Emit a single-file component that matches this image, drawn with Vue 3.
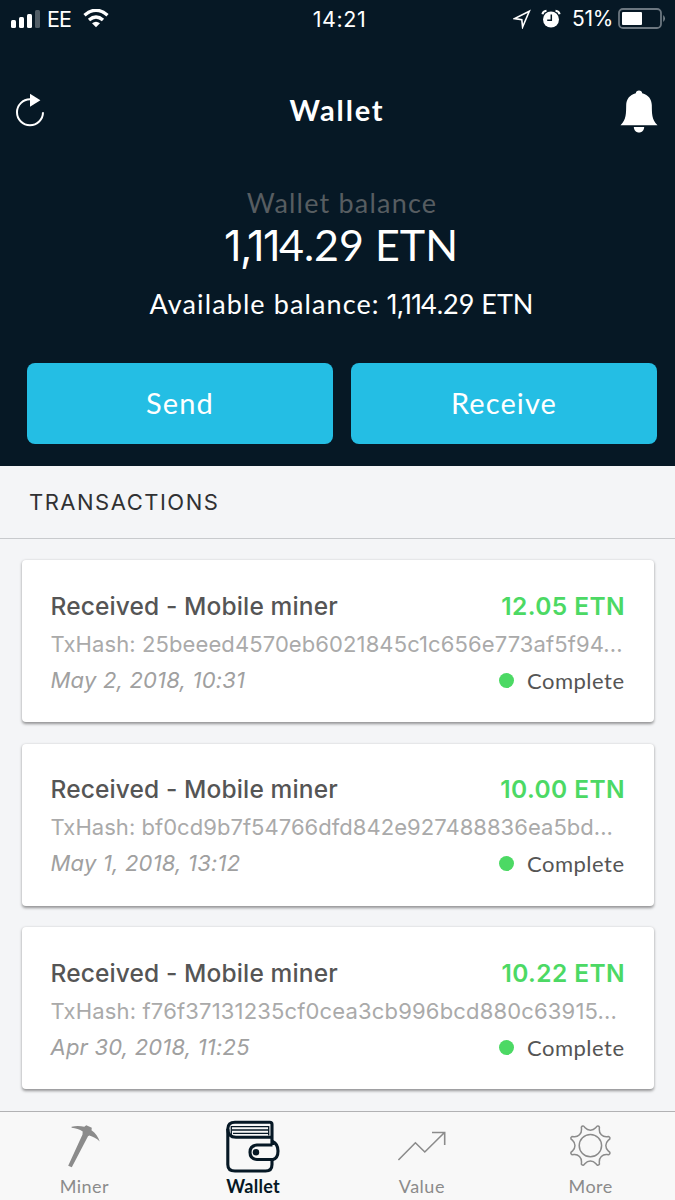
<template>
  <div class="screen">
    <header class="top">
      <div class="status-bar">
        <div class="status-left">
          <svg class="signal" width="31" height="20" viewBox="0 0 31 20">
            <rect x="0" y="10" width="5" height="8" rx="1.5" />
            <rect x="8" y="7" width="5" height="11" rx="1.5" />
            <rect x="16" y="4" width="5" height="14" rx="1.5" />
            <rect x="24" y="0" width="5" height="18" rx="1.5" opacity=".3" />
          </svg>
          <span class="carrier">EE</span>
          <svg class="wifi" width="26" height="20" viewBox="0 0 26 20">
            <path d="M1.5 6.2Q13 -3.6 24.5 6.2M6 11Q13 5 20 11" fill="none" stroke="#fff" stroke-width="3.4" />
            <path d="M9 14.2Q13 11.2 17 14.2L13 18.2Z" />
          </svg>
        </div>
        <span class="time">14:21</span>
        <div class="status-right">
          <svg width="18" height="20" viewBox="0 0 18 20">
            <path d="M16.3 2.2L1.6 9.6L8.8 10.8L9.6 18Z" fill="none" stroke="#fff" stroke-width="1.6" />
          </svg>
          <svg class="alarm" width="20" height="20" viewBox="0 0 20 20">
            <circle cx="10" cy="10.5" r="8" />
            <path d="M1.4 5.2Q2 2 5.5 1.7M14.5 1.7Q18 2 18.6 5.2" fill="none" stroke="#fff" stroke-width="2" />
            <path d="M10.3 5.5V11.2H6.2" fill="none" stroke="#061825" stroke-width="1.5" />
          </svg>
          <span class="percent">51%</span>
          <svg class="battery" width="49" height="22" viewBox="0 0 49 22">
            <rect x="1" y="1" width="42" height="19" rx="4" fill="none" stroke="#6c7780" stroke-width="1.8" />
            <rect x="4" y="4" width="20" height="13" rx="1" />
            <path d="M45.3 7Q48.5 10.5 45.3 14Z" fill="#8b949b" />
          </svg>
        </div>
      </div>

      <div class="nav">
        <svg class="refresh" width="30" height="36" viewBox="0 0 30 36">
          <path d="M28 19.3A13 13 0 1 1 15 6.3" fill="none" stroke="#fff" stroke-width="2" />
          <path d="M15 .8L25.4 7.3L15 13.8Z" />
        </svg>
        <h1>Wallet</h1>
        <svg class="bell" width="38" height="44" viewBox="0 0 38 44">
          <path d="M19 .5C20.8 .5 22 1.6 22.2 3.2C28.5 4.6 31.6 9.5 31.8 15C32 23 31.5 29.5 37.5 35.2H.5C6.5 29.5 6 23 6.2 15C6.4 9.5 9.5 4.6 15.8 3.2C16 1.6 17.2 .5 19 .5Z" />
          <path d="M13.8 37H24.2C24 40.3 22 42.5 19 42.5S14 40.3 13.8 37Z" />
        </svg>
      </div>

      <p class="balance-label">Wallet balance</p>
      <p class="balance"><span class="ones">1,11</span>4.29 ETN</p>
      <p class="available"><span class="available-label">Available balance:</span> <span class="ones">1,11</span>4.29 ETN</p>

      <div class="actions">
        <button>Send</button>
        <button>Receive</button>
      </div>
    </header>

    <h2>TRANSACTIONS</h2>

    <main>
      <div v-for="tx in transactions" :key="tx.hash" class="card">
        <div class="row">
          <span class="title">Received - Mobile miner</span>
          <span class="amount">{{ tx.amount }} ETN</span>
        </div>
        <p class="hash" :style="{ letterSpacing: tx.tracking + 'px' }">TxHash: {{ tx.hash }}...</p>
        <div class="row">
          <span class="date">{{ tx.date }}</span>
          <span class="state"><i class="dot"></i>Complete</span>
        </div>
      </div>
    </main>

    <nav class="tabs">
      <a class="tab">
        <svg width="56" height="56" viewBox="0 0 56 56">
          <path fill="#8b8b8b" d="M15.6 9.7C20 8.6 24.5 8.8 28.3 9.8L30.3 8.3L35.8 10.7L35.5 13.3C39.5 16 42.3 20 43.7 24.5C40.5 21.4 37 19.6 33.3 18.6L32 19.3L15.8 50.3L12.2 48.7L26.5 17.5L26.7 14.5C23.5 12.2 20 11 15.6 10.7Z" />
        </svg>
        <span>Miner</span>
      </a>
      <a class="tab active">
        <svg width="56" height="56" viewBox="0 0 56 56" fill="none" stroke="#061825" stroke-width="3.1">
          <path d="M47 27V7.5Q47 5.3 44.8 5.3H10Q2.8 5.3 2.8 12V47.5Q2.8 54 10 54H40.5Q47 54 47 47.5V43" />
          <path d="M2.8 12Q2.8 20.3 11 20.3H47" />
          <path d="M47.5 28H32Q25 28.5 25 35.3T32 42.5H48Q53 41 53 34T47.5 24.5V28" />
          <circle cx="31" cy="35.3" r="3.2" fill="#061825" stroke="none" />
          <path d="M6.3 18V9.6H43.7V18.5M7 13H43.5M8 16.3H43.5" stroke-width="1.3" />
        </svg>
        <span>Wallet</span>
      </a>
      <a class="tab">
        <svg width="56" height="56" viewBox="0 0 56 56" fill="none" stroke="#8b8b8b" stroke-width="1.6">
          <path d="M4.4 43L21.4 25.8L30.8 35L50.5 15.5M38 15.5H50.7V28" />
        </svg>
        <span>Value</span>
      </a>
      <a class="tab">
        <svg width="56" height="56" viewBox="0 0 56 56" fill="none" stroke="#8b8b8b" stroke-width="1.5">
          <path :d="gear" stroke-linejoin="round" />
          <circle cx="27.4" cy="28.6" r="11.2" />
        </svg>
        <span>More</span>
      </a>
    </nav>
  </div>
</template>

<script setup>
const transactions = [
  { amount: '12.05', hash: '25beeed4570eb6021845c1c656e773af5f94', date: 'May 2, 2018, 10:31', tracking: 0.1 },
  { amount: '10.00', hash: 'bf0cd9b7f54766dfd842e927488836ea5bd', date: 'May 1, 2018, 13:12', tracking: 0.04 },
  { amount: '10.22', hash: 'f76f37131235cf0cea3cb996bcd880c63915', date: 'Apr 30, 2018, 11:25', tracking: 0.17 },
];

const polar = (radius, degrees) => {
  const angle = (degrees * Math.PI) / 180;
  return `${(27.4 + radius * Math.cos(angle)).toFixed(2)} ${(28.6 + radius * Math.sin(angle)).toFixed(2)}`;
};

// eight teeth with a round hollow between each pair
const gear =
  [...Array(8).keys()]
    .map((i) => {
      const a = i * 45 + 22.5;
      return `${i ? 'L' : 'M'}${polar(20.6, a - 3.5)}Q${polar(21.6, a)} ${polar(20.6, a + 3.5)}L${polar(18.6, a + 6)}A7 7 0 0 0 ${polar(18.6, a + 39)}`;
    })
    .join('') + 'Z';
</script>

<style>
body {
  margin: 0;
}
</style>

<style scoped>
.screen {
  width: 675px;
  height: 1200px;
  overflow: hidden;
  display: flex;
  flex-direction: column;
  background: #f4f5f7;
  font-family: Inter, "Liberation Sans", sans-serif;
}

h1, h2, p {
  margin: 0;
  font-weight: 400;
}

svg {
  display: block;
  flex-shrink: 0;
}

.top {
  height: 466px;
  box-sizing: border-box;
  background: #061825;
  color: #fff;
  fill: #fff;
  font-family: Lato, sans-serif;
  text-align: center;
}

.status-bar {
  height: 37px;
  padding: 0 10px 0 11px;
  display: grid;
  grid-template-columns: 1fr auto 1fr;
  align-items: center;
  font-family: Inter, sans-serif;
  font-size: 21.5px;
}

.status-left,
.status-right {
  display: flex;
  align-items: center;
}

.status-right {
  justify-content: flex-end;
}

.signal {
  margin-right: 5px;
  margin-top: 2px;
}

.carrier {
  letter-spacing: -1px;
}

.wifi {
  margin-left: 12px;
}

.time {
  padding-left: 3px;
  letter-spacing: 0.6px;
}

.alarm {
  margin-left: 10px;
}

.percent {
  margin: 0 5px 0 11px;
  font-size: 21px;
  letter-spacing: -0.3px;
}

.battery {
  margin-top: 1px;
  margin-right: -2px;
}

.nav {
  height: 44px;
  padding: 0 17px 0 15px;
  margin-top: 53px;
  display: flex;
  align-items: center;
  justify-content: space-between;
}

.refresh {
  margin-top: -2px;
}

h1 {
  margin-top: -5px;
  padding-left: 9px;
  font-size: 29px;
  font-weight: 700;
  letter-spacing: 1.8px;
}

.balance-label {
  margin-top: 53px;
  padding-left: 9px;
  font-size: 27px;
  line-height: 32px;
  letter-spacing: 1.2px;
  color: #575d61;
}

/* narrow figure ones without a foot */
.ones {
  font-family: Inter, sans-serif;
  letter-spacing: -0.036em;
}

.balance {
  height: 52px;
  padding-left: 7px;
  font-size: 43px;
  line-height: 52px;
}

.available {
  height: 32px;
  margin-top: 17px;
  padding-left: 8px;
  font-size: 27px;
  line-height: 32px;
}

.available-label {
  letter-spacing: 1.1px;
}

.actions {
  margin-top: 43px;
  padding: 0 18px 0 27px;
  display: flex;
  gap: 18px;
}

button {
  flex: 1;
  height: 81px;
  padding: 0 0 3px;
  border: 0;
  border-radius: 8px;
  background: #24bee4;
  color: #fff;
  font: 29px Lato, sans-serif;
  letter-spacing: 1.1px;
}

h2 {
  height: 72px;
  padding-left: 29px;
  border-bottom: 1px solid #c8cacd;
  line-height: 73px;
  font-size: 22px;
  letter-spacing: 1.5px;
  color: #303133;
}

main {
  flex: 1;
  padding: 21px 21.5px 0;
  display: flex;
  flex-direction: column;
  gap: 21.5px;
}

.card {
  width: 632px;
  height: 162px;
  box-sizing: border-box;
  padding: 27.5px 29px 0;
  border-radius: 4px;
  background: #fff;
  box-shadow: 0 1.5px 3px rgba(0, 0, 0, 0.4);
}

.row {
  display: flex;
  justify-content: space-between;
  line-height: 36px;
  white-space: nowrap;
}

.title {
  font-size: 24.5px;
  font-weight: 450;
  letter-spacing: 0.13px;
  color: #555;
}

.amount {
  margin-right: -0.5px;
  font-size: 24.5px;
  font-weight: 600;
  letter-spacing: 0.4px;
  color: #4cd964;
}

.hash {
  font-size: 22px;
  line-height: 40px;
  white-space: nowrap;
  color: #aaa;
}

.date {
  font-size: 22px;
  font-style: italic;
  line-height: 33px;
  letter-spacing: 0.2px;
  color: #a0a0a0;
}

.state {
  display: flex;
  align-items: center;
  font-family: Lato, sans-serif;
  font-size: 22px;
  line-height: 31px;
  letter-spacing: 0.5px;
  color: #555;
}

.dot {
  width: 15px;
  height: 15px;
  margin-right: 13px;
  border-radius: 50%;
  background: #4cd964;
}

.tabs {
  height: 88px;
  border-top: 1px solid #b2b2b4;
  display: flex;
  background: #f8f8f8;
}

.tab {
  flex: 1;
  padding-top: 5px;
  display: flex;
  flex-direction: column;
  align-items: center;
  font: 18px/22px Lato, sans-serif;
  letter-spacing: 0.5px;
  color: #8b8b8b;
}

.tab span {
  margin-top: 2px;
}

.active {
  font-weight: 700;
  letter-spacing: 0.3px;
  color: #061825;
}
</style>
